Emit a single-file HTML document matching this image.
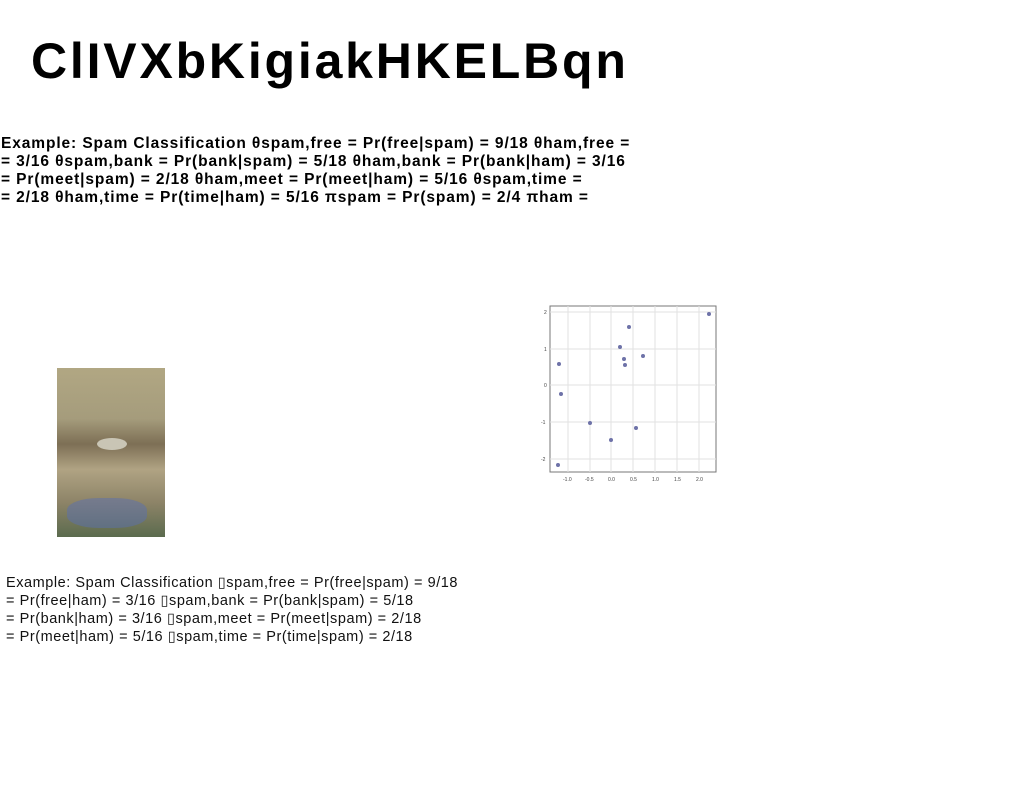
<!DOCTYPE html>
<html><head><meta charset="utf-8"><style>
body{margin:0;width:1024px;height:788px;background:#fff;position:relative;overflow:hidden;font-family:"Liberation Sans",sans-serif}
h1{position:absolute;left:31px;top:32px;margin:0;font-size:50px;font-weight:bold;color:#000;letter-spacing:2.8px}
.b{position:absolute;left:1px;top:135px;font-size:15.5px;font-weight:bold;line-height:18px;white-space:pre;letter-spacing:0.9px}
.n{position:absolute;left:6px;top:574px;font-size:14.5px;line-height:18px;white-space:pre;color:#111;letter-spacing:0.55px}
.img{position:absolute;left:57px;top:368px;width:108px;height:169px;background:linear-gradient(180deg,#b1a783 0%,#a59c7c 30%,#7d6f55 45%,#b0a383 60%,#8c8367 80%,#5b6b4e 100%)}
</style></head><body>
<h1>ClIVXbKigiakHKELBqn</h1>
<div class="b">Example: Spam Classification θspam,free = Pr(free|spam) = 9/18 θham,free =
= 3/16 θspam,bank = Pr(bank|spam) = 5/18 θham,bank = Pr(bank|ham) = 3/16
= Pr(meet|spam) = 2/18 θham,meet = Pr(meet|ham) = 5/16 θspam,time =
= 2/18 θham,time = Pr(time|ham) = 5/16 πspam = Pr(spam) = 2/4 πham =</div>
<div class="img"><div style="position:absolute;left:40px;top:70px;width:30px;height:12px;background:#c9c5b5;border-radius:50%"></div><div style="position:absolute;left:10px;top:130px;width:80px;height:30px;background:#5a70b0;opacity:.5;border-radius:40%"></div></div>
<svg style="position:absolute;left:530px;top:300px" width="200" height="190" font-family="Liberation Sans" font-size="5" fill="#444">
<rect x="20" y="6" width="166" height="166" fill="#fff" stroke="#777"/>
<g stroke="#e2e2e2">
<line x1="38" y1="6" x2="38" y2="172"/><line x1="60" y1="6" x2="60" y2="172"/><line x1="81" y1="6" x2="81" y2="172"/><line x1="103" y1="6" x2="103" y2="172"/><line x1="125" y1="6" x2="125" y2="172"/><line x1="147" y1="6" x2="147" y2="172"/><line x1="169" y1="6" x2="169" y2="172"/>
<line x1="20" y1="12" x2="186" y2="12"/><line x1="20" y1="49" x2="186" y2="49"/><line x1="20" y1="85" x2="186" y2="85"/><line x1="20" y1="122" x2="186" y2="122"/><line x1="20" y1="159" x2="186" y2="159"/>
</g>
<text x="14" y="14">2</text><text x="14" y="51">1</text><text x="14" y="87">0</text><text x="11" y="124">-1</text><text x="11" y="161">-2</text>
<text x="33" y="181">-1.0</text><text x="55" y="181">-0.5</text><text x="78" y="181">0.0</text><text x="100" y="181">0.5</text><text x="122" y="181">1.0</text><text x="144" y="181">1.5</text><text x="166" y="181">2.0</text>
<g fill="#6e72a8">
<circle cx="29" cy="64" r="2"/><circle cx="31" cy="94" r="2"/><circle cx="60" cy="123" r="2"/><circle cx="81" cy="140" r="2"/><circle cx="28" cy="165" r="2"/><circle cx="99" cy="27" r="2"/><circle cx="90" cy="47" r="2"/><circle cx="94" cy="59" r="2"/><circle cx="95" cy="65" r="2"/><circle cx="113" cy="56" r="2"/><circle cx="106" cy="128" r="2"/><circle cx="179" cy="14" r="2"/>
</g></svg>
<div class="n">Example: Spam Classification ▯spam,free = Pr(free|spam) = 9/18
= Pr(free|ham) = 3/16 ▯spam,bank = Pr(bank|spam) = 5/18
= Pr(bank|ham) = 3/16 ▯spam,meet = Pr(meet|spam) = 2/18
= Pr(meet|ham) = 5/16 ▯spam,time = Pr(time|spam) = 2/18</div>
</body></html>
